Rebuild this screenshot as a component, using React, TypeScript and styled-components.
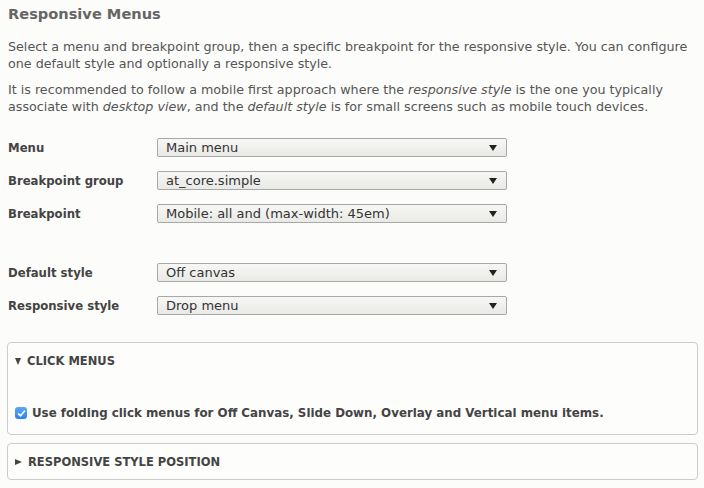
import React from "react";
import styled, { createGlobalStyle } from "styled-components";

const FONT = `"DejaVu Sans", "Liberation Sans", sans-serif`;

const Global = createGlobalStyle`
  html, body { margin: 0; padding: 0; background: #fcfcfa; }
  body { font-family: ${FONT}; color: #555; }
`;

const Page = styled.div`
  width: 704px;
  height: 488px;
  box-sizing: border-box;
  padding: 4px 6px 0 8px;
  overflow: hidden;
  background: #fcfcfa;
`;

const Title = styled.h2`
  margin: 0 0 14px;
  font-size: 14.6px;
  font-weight: bold;
  color: #666;
  line-height: 20px;
`;

const Para = styled.p`
  margin: 0 0 9px;
  font-size: 12.7px;
  line-height: 17px;
  color: #555;
`;

const Form = styled.div`
  display: flex;
  flex-direction: column;
  margin-top: 23px;
`;

const Row = styled.div<{ $gap?: number }>`
  display: flex;
  align-items: center;
  height: 19px;
  margin-bottom: ${(p) => p.$gap ?? 14}px;
`;

const Label = styled.label`
  width: 149px;
  font-size: 11.7px;
  font-weight: bold;
  color: #444;
`;

const Select = styled.div`
  width: 350px;
  height: 19px;
  box-sizing: border-box;
  border: 1px solid #a8a8a8;
  border-radius: 2px;
  background: linear-gradient(#f7f7f5, #e9e9e6);
  display: flex;
  align-items: center;
  justify-content: space-between;
  padding: 0 9px 0 8px;
  font-size: 13px;
  color: #333;
`;

const Arrow = styled.span`
  width: 0;
  height: 0;
  border-left: 4px solid transparent;
  border-right: 4px solid transparent;
  border-top: 6px solid #222;
`;

const Details = styled.div<{ $h: number }>`
  box-sizing: border-box;
  height: ${(p) => p.$h}px;
  border: 1px solid #ccc;
  border-radius: 4px;
  background: #fdfdfc;
  padding: 0 0 0 7px;
  margin-bottom: 8px;
  margin-left: -1px;
`;

const Summary = styled.div`
  display: flex;
  align-items: center;
  height: 36px;
  font-size: 11.5px;
  font-weight: bold;
  color: #444;
`;

const Marker = styled.span<{ $open?: boolean }>`
  width: 0;
  height: 0;
  margin-right: 6px;
  ${(p) =>
    p.$open
      ? `border-left: 3.5px solid transparent; border-right: 3.5px solid transparent; border-top: 7px solid #444;`
      : `border-top: 3.5px solid transparent; border-bottom: 3.5px solid transparent; border-left: 7px solid #444;`}
`;

const CheckRow = styled.div`
  display: flex;
  align-items: center;
  margin-top: 27px;
  font-size: 11.85px;
  font-weight: bold;
  color: #444;
`;

const Box = styled.span`
  width: 12px;
  height: 12px;
  border-radius: 3px;
  background: linear-gradient(#5aa8f6, #2f82ee);
  display: inline-flex;
  align-items: center;
  justify-content: center;
  margin-right: 5px;
  flex: none;
`;

const fields: { label: string; value: string; gap?: number }[] = [
  { label: "Menu", value: "Main menu" },
  { label: "Breakpoint group", value: "at_core.simple" },
  { label: "Breakpoint", value: "Mobile: all and (max-width: 45em)", gap: 40 },
  { label: "Default style", value: "Off canvas" },
  { label: "Responsive style", value: "Drop menu", gap: 27 },
];

export default function App() {
  return (
    <>
      <Global />
      <Page>
        <Title>Responsive Menus</Title>
        <Para>
          Select a menu and breakpoint group, then a specific breakpoint for the responsive style. You can configure
          one default style and optionally a responsive style.
        </Para>
        <Para>
          It is recommended to follow a mobile first approach where the <em>responsive style</em> is the one you typically
          associate with <em>desktop view</em>, and the <em>default style</em> is for small screens such as mobile touch devices.
        </Para>
        <Form>
          {fields.map((f) => (
            <Row key={f.label} $gap={f.gap}>
              <Label>{f.label}</Label>
              <Select>
                <span>{f.value}</span>
                <Arrow />
              </Select>
            </Row>
          ))}
        </Form>
        <Details $h={93}>
          <Summary>
            <Marker $open />
            CLICK MENUS
          </Summary>
          <CheckRow>
            <Box>
              <svg width="9" height="9" viewBox="0 0 9 9">
                <path d="M1.5 4.8 L3.6 6.8 L7.5 2" stroke="#fff" strokeWidth="1.6" fill="none" strokeLinecap="round" strokeLinejoin="round" />
              </svg>
            </Box>
            Use folding click menus for Off Canvas, Slide Down, Overlay and Vertical menu items.
          </CheckRow>
        </Details>
        <Details $h={37}>
          <Summary>
            <Marker />
            RESPONSIVE STYLE POSITION
          </Summary>
        </Details>
      </Page>
    </>
  );
}
